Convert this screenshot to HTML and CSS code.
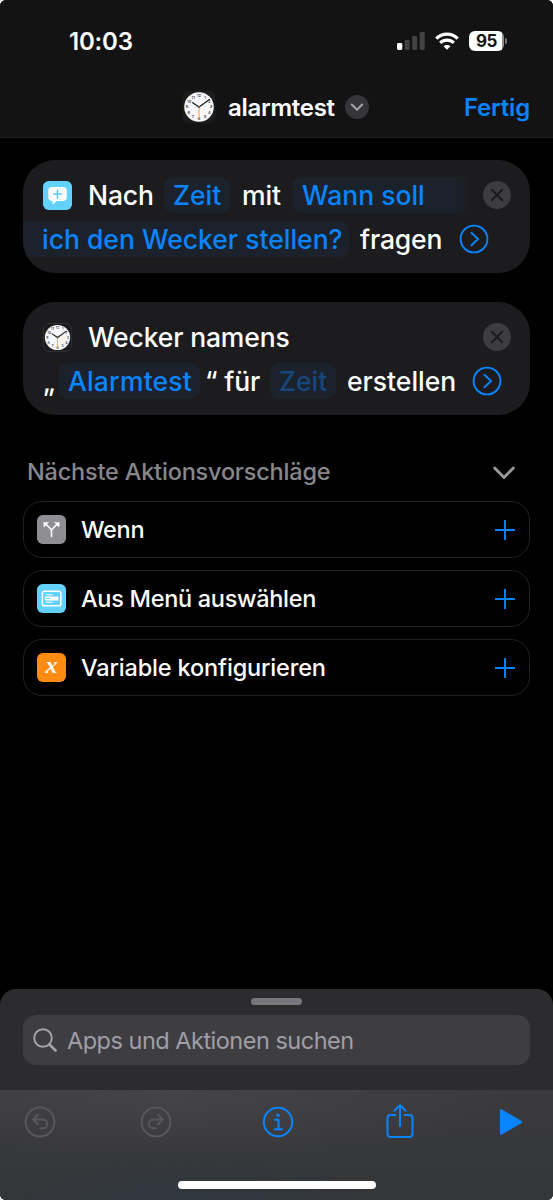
FILE: index.html
```html
<!DOCTYPE html>
<html lang="de">
<head>
<meta charset="utf-8">
<title>alarmtest</title>
<link rel="stylesheet" href="styles.css">
</head>
<body>
<svg class="defs" aria-hidden="true">
  <symbol id="remove" viewBox="0 0 28 28">
    <circle cx="14" cy="14" r="14" fill="#3d3c41"/>
    <path d="m8.800 8.800 10.400 10.400M19.200 8.800 8.800 19.200" stroke="#1b1b1d" stroke-width="2" stroke-linecap="round"/>
  </symbol>
  <symbol id="expand" viewBox="0 0 30 30">
    <circle cx="15" cy="15" r="13.400" fill="none" stroke="#0a84ff" stroke-width="1.900"/>
    <path d="m12.400 8.700 6.700 6.300-6.700 6.300" fill="none" stroke="#0a84ff" stroke-width="1.900" stroke-linecap="round" stroke-linejoin="round"/>
  </symbol>
  <symbol id="plus" viewBox="0 0 20 20">
    <path d="M10 .7v18.600M.7 10h18.600" stroke="#0a84ff" stroke-width="1.900" stroke-linecap="round"/>
  </symbol>
</svg>
<div class="phone">
  <header class="header">
    <div class="status">
      <span class="time">10:03</span>
      <div class="status-icons">
        <svg class="signal" viewBox="0 0 28 18"><rect y="11" width="5.300" height="7" rx="1.400" fill="#fff"/><g fill="#434343"><rect x="7.700" y="8" width="5" height="10" rx="1.400"/><rect x="15.200" y="4" width="5" height="14" rx="1.400"/><rect x="22.700" width="5" height="18" rx="1.400"/></g></svg>
        <svg class="wifi" viewBox="0 0 24 18"><g fill="none" stroke="#fff" stroke-width="3.300"><path d="M1.300 6.600C7.400.5 16.600.5 22.700 6.600"/><path d="M5.200 10.900c3.900-3.800 9.700-3.800 13.600 0"/></g><path d="M8.500 14.300c2-1.900 5-1.900 7 0L12 17.800z" fill="#fff"/></svg>
        <div class="battery"><span class="battery-level">95</span><i class="battery-tip"></i></div>
      </div>
    </div>
    <div class="titlebar">
      <div class="title-group">
        <svg class="title-clock" viewBox="0 0 34 34">
          <rect class="clock-case" x=".5" y=".5" width="33" height="33" rx="7"/>
          <circle cx="17" cy="17" r="14.800" fill="#f7f7f9"/>
          <g class="clock-num">
            <text x="17" y="7">12</text><text x="23" y="8.600">1</text><text x="27.300" y="12.800">2</text>
            <text x="29" y="18.400">3</text><text x="27.300" y="24.200">4</text><text x="23" y="28.400">5</text>
            <text x="17" y="30.200">6</text><text x="11" y="28.400">7</text><text x="6.700" y="24.200">8</text>
            <text x="5" y="18.400">9</text><text x="7.200" y="12.600">10</text><text x="11.200" y="8.600">11</text>
          </g>
          <path d="M17 17 10.700 12.700M17 17 27.500 9.600" stroke="#151515" stroke-width="1.200" stroke-linecap="round"/>
          <path d="M17 15.500V29" stroke="#f0a040" stroke-width="1"/>
          <circle cx="17" cy="17" r="1.100" fill="#805020"/>
        </svg>
        <span class="title">alarmtest</span>
        <svg class="title-chevron" viewBox="0 0 24 24"><circle cx="12" cy="12" r="12" fill="#36363a"/><path d="m6.800 9.500 5.200 5.300 5.200-5.300" fill="none" stroke="#a2a2a7" stroke-width="2.100" stroke-linecap="round" stroke-linejoin="round"/></svg>
      </div>
      <span class="done">Fertig</span>
    </div>
  </header>
  <main class="content">
    <section class="card">
      <div class="line">
        <svg class="action-icon" viewBox="0 0 28 28"><rect width="28" height="28" rx="5.500" fill="#64d2ff"/><path d="M8.500 5.700h11a3.400 3.400 0 0 1 3.400 3.400v6.700a3.400 3.400 0 0 1-3.400 3.400h-6L10 22.300c-.4.400-.9.200-.9-.4v-2.700h-.6a3.400 3.400 0 0 1-3.400-3.400V9.100a3.400 3.400 0 0 1 3.400-3.400z" fill="#fff"/><path d="M14 8.900v7.400M10.300 12.600h7.400" stroke="#58c8f6" stroke-width="1.500" stroke-linecap="round"/></svg>
        <span class="word nach">Nach</span>
        <span class="chip zeit">Zeit</span>
        <span class="word mit">mit</span>
        <span class="chip chip-open">Wann soll</span>
        <svg class="remove"><use href="#remove"/></svg>
      </div>
      <div class="line">
        <span class="chip chip-cont">ich den Wecker stellen?</span>
        <span class="word fragen">fragen</span>
        <svg class="expand"><use href="#expand"/></svg>
      </div>
    </section>
    <section class="card">
      <div class="line">
        <svg class="action-icon cased" viewBox="0 0 34 34">
          <rect class="clock-case" x=".5" y=".5" width="33" height="33" rx="7"/>
          <circle cx="17" cy="17" r="14.800" fill="#f7f7f9"/>
          <g class="clock-num">
            <text x="17" y="7">12</text><text x="23" y="8.600">1</text><text x="27.300" y="12.800">2</text>
            <text x="29" y="18.400">3</text><text x="27.300" y="24.200">4</text><text x="23" y="28.400">5</text>
            <text x="17" y="30.200">6</text><text x="11" y="28.400">7</text><text x="6.700" y="24.200">8</text>
            <text x="5" y="18.400">9</text><text x="7.200" y="12.600">10</text><text x="11.200" y="8.600">11</text>
          </g>
          <path d="M17 17 10.700 12.700M17 17 27.500 9.600" stroke="#151515" stroke-width="1.200" stroke-linecap="round"/>
          <path d="M17 15.500V29" stroke="#f0a040" stroke-width="1"/>
          <circle cx="17" cy="17" r="1.100" fill="#805020"/>
        </svg>
        <span class="word namens">Wecker namens</span>
        <svg class="remove"><use href="#remove"/></svg>
      </div>
      <div class="line">
        <span class="word open-quote">„</span>
        <span class="chip name">Alarmtest</span>
        <span class="word fuer">“ für</span>
        <span class="chip zeit placeholder">Zeit</span>
        <span class="word erstellen">erstellen</span>
        <svg class="expand"><use href="#expand"/></svg>
      </div>
    </section>
    <div class="section-head">
      <span class="section-title">Nächste Aktionsvorschläge</span>
      <svg class="section-chevron" viewBox="0 0 22 14"><path d="m1.700 2 9.300 9.500L20.300 2" fill="none" stroke="#97979c" stroke-width="2.900" stroke-linecap="round" stroke-linejoin="round"/></svg>
    </div>
    <div class="suggestions">
      <div class="suggestion">
        <svg class="action-icon" viewBox="0 0 28 28"><rect width="28" height="28" rx="5.500" fill="#8e8e93"/><path d="M14 20.800v-5.300c0-1.200-.4-1.700-1.200-2.500L8.700 8.900M14 15.500c0-1.200.4-1.700 1.200-2.500l4.100-4.100" fill="none" stroke="#fff" stroke-width="1.500" stroke-linecap="round"/><path d="M6.500 7.200h4.600l-4.300 4.500zM21.500 7.200h-4.600l4.300 4.500z" fill="#fff" stroke="#fff" stroke-width=".5" stroke-linejoin="round"/></svg>
        <span class="label wenn">Wenn</span>
        <svg class="plus"><use href="#plus"/></svg>
      </div>
      <div class="suggestion">
        <svg class="action-icon" viewBox="0 0 28 28"><rect width="28" height="28" rx="5.500" fill="#64d2ff"/><rect x="5.200" y="7" width="17.800" height="14" rx="2" fill="none" stroke="#fff" stroke-width="1.500"/><path d="M8.500 10.300h6.500M8.500 17.700h6.500" stroke="#fff" stroke-width="1"/><rect x="7.500" y="12" width="13.200" height="4" rx=".8" fill="#fff"/><path d="M8.800 14h4" stroke="#64d2ff" stroke-width="1"/></svg>
        <span class="label menu">Aus Menü auswählen</span>
        <svg class="plus"><use href="#plus"/></svg>
      </div>
      <div class="suggestion">
        <span class="action-icon variable">x</span>
        <span class="label konfig">Variable konfigurieren</span>
        <svg class="plus"><use href="#plus"/></svg>
      </div>
    </div>
  </main>
  <footer class="sheet">
    <i class="grabber"></i>
    <div class="search">
      <svg class="search-icon" viewBox="0 0 24 24"><circle cx="10" cy="10" r="8.800" fill="none" stroke="#a5a4aa" stroke-width="1.900"/><path d="m16.600 16.600 5.900 5.900" stroke="#a5a4aa" stroke-width="2.700" stroke-linecap="round"/></svg>
      <span class="search-text">Apps und Aktionen suchen</span>
    </div>
    <div class="toolbar">
      <div class="tools">
        <svg class="tool" viewBox="0 0 32 32"><g class="muted"><circle cx="16" cy="16" r="14.400"/><path d="M14 8.800 9 13.500l5 4.700M9.300 13.500h9.200c2.800 0 4.700 1.900 4.700 4.400s-1.900 4.400-4.700 4.400h-2.200"/></g></svg>
        <svg class="tool" viewBox="0 0 32 32"><g class="muted" transform="translate(32) scale(-1 1)"><circle cx="16" cy="16" r="14.400"/><path d="M14 8.800 9 13.500l5 4.700M9.300 13.500h9.200c2.800 0 4.700 1.900 4.700 4.400s-1.900 4.400-4.700 4.400h-2.200"/></g></svg>
        <svg class="tool" viewBox="0 0 32 32"><g class="accent"><circle cx="16" cy="16" r="14.200"/><path d="M13 13.700h3.500v9.500M12.500 23.300h7.600"/></g><circle cx="15.900" cy="9.200" r="1.700" fill="#0a84ff"/></svg>
        <svg class="share" viewBox="0 0 28 36"><g class="accent"><path d="M9.300 11.900H4.800C2.700 11.900 1.500 13 1.500 15v15.800c0 2 1.200 3.200 3.300 3.200h18.400c2.100 0 3.300-1.200 3.300-3.200V15c0-2-1.200-3.100-3.300-3.100h-4.500M14 23.200V2.300M8.400 7.700 14 2l5.600 5.700"/></g></svg>
        <svg class="play" viewBox="0 0 24 28"><path d="M2 2.300v23.400L22 14z" fill="#0a84ff" stroke="#0a84ff" stroke-width="2.200" stroke-linejoin="round"/></svg>
      </div>
      <i class="home"></i>
    </div>
  </footer>
</div>
</body>
</html>
```
FILE: styles.css
```css
* { box-sizing: border-box; }
body { margin: 0; background: #fff; font-family: Inter, "Liberation Sans", sans-serif; color: #fff; }
svg { display: block; flex: none; }
.defs { position: absolute; width: 0; height: 0; }
.phone { width: 553px; height: 1200px; display: flex; flex-direction: column; background: #000; border-radius: 6px; overflow: hidden; }
.header { height: 138px; background: #131313; border-bottom: 1px solid #1d1d1d; }
.status { height: 77px; padding: 5px 46px 0 69px; display: flex; align-items: center; justify-content: space-between; }
.time { font-size: 24px; font-weight: 560; letter-spacing: -.2px; }
.status-icons { display: flex; align-items: center; }
.signal { width: 28px; height: 18px; margin-right: 10px; }
.wifi { width: 24px; height: 18px; margin-right: 10px; }
.battery { display: flex; align-items: center; gap: 1px; }
.battery-level { width: 35px; height: 20px; border-radius: 6px; background: linear-gradient(90deg, #fff 33.500px, #8f8f8f 33.500px); color: #131313; font-size: 17px; font-weight: 700; line-height: 20px; text-align: center; letter-spacing: -.5px; }
.battery-tip { width: 2px; height: 6px; background: #777; border-radius: 0 2px 2px 0; }
.titlebar { height: 60px; display: flex; align-items: center; justify-content: space-between; padding: 0 23px 0 182px; }
.title-group { display: flex; align-items: center; }
.title-clock { width: 34px; height: 34px; }
.clock-case { fill: #1c1c1e; }
.cased .clock-case { stroke: #353538; stroke-width: 1; }
.clock-num { font: 600 4px Inter, sans-serif; fill: #444; text-anchor: middle; }
.title { width: 107px; margin-left: 12px; font-size: 24px; font-weight: 560; letter-spacing: -.28px; white-space: nowrap; }
.title-chevron { width: 24px; height: 24px; margin-left: 10px; }
.done { font-size: 24px; font-weight: 560; letter-spacing: -.2px; color: #0a84ff; }
.content { flex: 1; padding: 22px 23px 0; }
.card { height: 113px; padding: 13px 19px 0 20px; border-radius: 32px; background: #1c1c1e; overflow: hidden; }
.card + .card { margin-top: 29px; }
.line { height: 44px; display: flex; align-items: center; font-size: 26.500px; font-weight: 450; white-space: nowrap; }
.action-icon { width: 29px; height: 29px; flex: none; }
.word { letter-spacing: -.15px; }
.nach { width: 65px; margin-left: 16px; }
.chip { height: 36px; line-height: 36px; padding: 0 9px; border-radius: 9px; background: #1b222c; color: #0a84ff; letter-spacing: 0; }
.zeit { width: 66px; margin-left: 11px; }
.mit { width: 39px; margin-left: 12px; }
.chip-open { width: 178px; margin-left: 12px; background: linear-gradient(90deg, #1b222c 160px, #1c1c1e); }
.remove { width: 28px; height: 28px; margin-left: auto; }
.chip-cont { width: 326px; margin-left: -20px; padding-left: 19px; border-radius: 0 9px 9px 0; }
.fragen { width: 82px; margin-left: 11px; }
.expand { width: 30px; height: 30px; margin-left: 17px; }
.namens { margin-left: 16px; }
.open-quote { width: 10px; }
.name { width: 141px; margin-left: 6px; letter-spacing: .2px; }
.fuer { width: 54px; margin-left: 5px; }
.placeholder { color: #18477d; }
.erstellen { width: 108px; margin-left: 11px; letter-spacing: 0; }
.section-head { height: 86px; padding: 27px 15px 0 4px; display: flex; align-items: center; justify-content: space-between; }
.section-title { font-size: 23.500px; font-weight: 550; letter-spacing: -.2px; color: #87878c; }
.section-chevron { width: 22px; height: 14px; margin-top: 2px; }
.suggestions { display: flex; flex-direction: column; gap: 12px; }
.suggestion { height: 57px; display: flex; align-items: center; padding: 0 14px 0 13px; border: 1px solid #212121; border-radius: 19px; }
.label { margin-left: 15px; font-size: 23.500px; font-weight: 500; letter-spacing: -.3px; white-space: nowrap; }
.konfig { letter-spacing: -.15px; }
.plus { width: 20px; height: 20px; margin-left: auto; }
.variable { border-radius: 6px; background: #ff8c12; font: italic 700 24px/25px "Liberation Serif", serif; text-align: center; }
.sheet { height: 211px; background: #2c2c2e; border-radius: 16px 16px 0 0; display: flex; flex-direction: column; align-items: center; overflow: hidden; }
.grabber { width: 51px; height: 7px; margin-top: 9px; border-radius: 4px; background: #77767c; flex: none; }
.search { width: 507px; height: 50px; margin-top: 10px; padding-left: 10px; display: flex; align-items: center; border-radius: 13px; background: #3e3d42; flex: none; }
.search-icon { width: 24px; height: 24px; }
.search-text { margin-left: 10px; font-size: 23.500px; letter-spacing: -.5px; color: #a09fa6; }
.toolbar { width: 553px; height: 110px; margin-top: 25px; display: flex; flex-direction: column; align-items: center; background: radial-gradient(ellipse 190px 50px at 190px 115px, #303842, #30384200), radial-gradient(ellipse 360px 70px at 170px 0, #454446, #45444600), linear-gradient(#3a3a3c, #343638); }
.tools { width: 553px; height: 62px; padding: 2px 0 0 24px; display: grid; grid-template-columns: 116px 122px 124px 113px 24px; align-items: center; }
.tool { width: 32px; height: 32px; }
.muted { fill: none; stroke: #58585b; stroke-width: 2; stroke-linecap: round; stroke-linejoin: round; }
.accent { fill: none; stroke: #0a84ff; stroke-width: 2; stroke-linecap: round; stroke-linejoin: round; }
.share { width: 28px; height: 36px; margin-top: -2px; }
.play { width: 24px; height: 28px; }
.home { width: 198px; height: 8px; margin-top: 29px; border-radius: 4px; background: #fff; }
```
